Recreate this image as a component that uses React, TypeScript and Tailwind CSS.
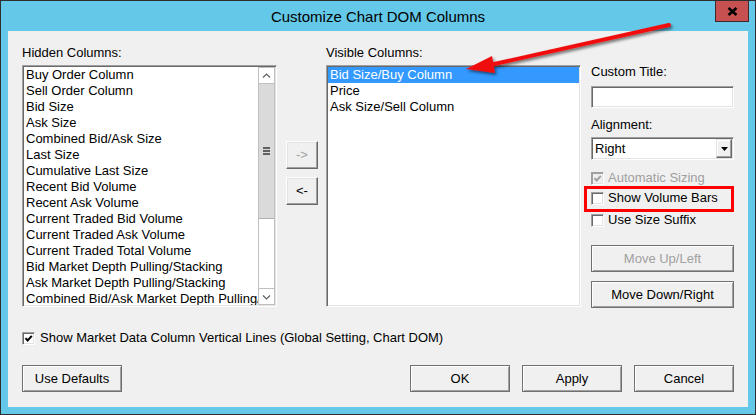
import React from "react";

const hidden = [
  "Buy Order Column",
  "Sell Order Column",
  "Bid Size",
  "Ask Size",
  "Combined Bid/Ask Size",
  "Last Size",
  "Cumulative Last Size",
  "Recent Bid Volume",
  "Recent Ask Volume",
  "Current Traded Bid Volume",
  "Current Traded Ask Volume",
  "Current Traded Total Volume",
  "Bid Market Depth Pulling/Stacking",
  "Ask Market Depth Pulling/Stacking",
  "Combined Bid/Ask Market Depth Pulling/Stacking",
];

const visible = ["Bid Size/Buy Column", "Price", "Ask Size/Sell Column"];

const sunken =
  "border border-t-[#a0a0a0] border-l-[#a0a0a0] border-r-white border-b-white shadow-[inset_1px_1px_0_#696969,inset_-1px_-1px_0_#e3e3e3]";

function Check({ checked, disabled }: { checked?: boolean; disabled?: boolean }) {
  return (
    <span
      className={
        disabled
          ? "flex h-[13px] w-[13px] shrink-0 items-center justify-center border border-t-[#a0a0a0] border-l-[#a0a0a0] border-r-white border-b-white bg-[#f0f0f0] shadow-[inset_1px_1px_0_#a0a0a0,inset_-1px_-1px_0_#e3e3e3]"
          : "flex h-[13px] w-[13px] shrink-0 items-center justify-center border border-t-[#a0a0a0] border-l-[#a0a0a0] border-r-white border-b-white bg-white shadow-[inset_1px_1px_0_#696969,inset_-1px_-1px_0_#e3e3e3]"
      }
    >
      {checked && (
        <svg width="9" height="9" viewBox="0 0 9 9">
          <path
            d="M1.5 4.2 L3.6 6.5 L7.8 1.8"
            stroke={disabled ? "#a0a0a0" : "#000"}
            strokeWidth="2"
            fill="none"
          />
        </svg>
      )}
    </span>
  );
}

function BigButton({ label, disabled, className }: { label: string; disabled?: boolean; className?: string }) {
  return (
    <div
      className={
        "flex h-[27px] items-center justify-center border border-[#707070] bg-[#f0f0f0] shadow-[inset_1px_1px_0_#ffffff,inset_-1px_-1px_0_#a0a0a0] " +
        (className ?? "")
      }
    >
      <span className={disabled ? "text-[#a0a0a0]" : "text-black"}>{label}</span>
    </div>
  );
}

function SmallButton({ label, disabled }: { label: string; disabled?: boolean }) {
  return (
    <div className="flex h-[28px] w-[32px] items-center justify-center border border-t-white border-l-white border-r-[#696969] border-b-[#696969] bg-[#f0f0f0] shadow-[inset_-1px_-1px_0_#a0a0a0,inset_1px_1px_0_#e3e3e3]">
      <span className={disabled ? "text-[#a0a0a0]" : "text-black"}>{label}</span>
    </div>
  );
}

function Scrollbar() {
  return (
    <div className="flex h-full w-[17px] shrink-0 flex-col border border-[#c0c0c0] bg-white">
      <div className="flex h-[16px] items-center justify-center border-b border-[#c0c0c0] bg-white">
        <svg width="9" height="6" viewBox="0 0 9 6">
          <path d="M1 4.5 L4.5 1 L8 4.5" stroke="#606060" strokeWidth="1.2" fill="none" />
        </svg>
      </div>
      <div className="flex h-[135px] flex-col items-center justify-center gap-px border-b border-[#b0b0b0] bg-[#dadada]">
        <div className="h-[2px] w-[7px] bg-[#606060]" />
        <div className="h-[2px] w-[7px] bg-[#606060]" />
        <div className="h-[2px] w-[7px] bg-[#606060]" />
      </div>
      <div className="flex-1 bg-white" />
      <div className="flex h-[16px] items-center justify-center border-t border-[#c0c0c0] bg-white">
        <svg width="9" height="6" viewBox="0 0 9 6">
          <path d="M1 1.5 L4.5 5 L8 1.5" stroke="#606060" strokeWidth="1.2" fill="none" />
        </svg>
      </div>
    </div>
  );
}

export default function App() {
  return (
    <div className="relative h-[415px] w-[756px] overflow-hidden border border-[#2e2e2e] bg-[#64c8e8] font-['Liberation_Sans',Arial,sans-serif] text-[13px] leading-[16px] text-black">
      {/* Title bar */}
      <div className="relative flex h-[30px] items-center justify-center">
        <span className="pt-px font-['Liberation_Sans',Arial,sans-serif] text-[15px] text-black">
          Customize Chart DOM Columns
        </span>
        <div className="absolute right-[6px] top-[-1px] flex h-[22px] w-[34px] items-center justify-center border border-[#3c2a2a] bg-[#c75050]">
          <svg width="11" height="9" viewBox="0 0 11 9">
            <path d="M1.5 1 L9.5 8 M9.5 1 L1.5 8" stroke="#000" strokeWidth="2.6" />
          </svg>
        </div>
      </div>

      {/* Content */}
      <div className="mx-[7px] flex h-[376px] flex-col bg-[#f0f0f0] px-[14px] pt-[14px]">
        <div className="flex h-[263px]">
          {/* Hidden columns */}
          <div className="flex w-[255px] shrink-0 flex-col">
            <div className="h-[16px]">Hidden Columns:</div>
            <div className={"mt-[4px] flex h-[242px] overflow-hidden bg-white p-px " + sunken}>
              <div className="min-w-0 flex-1 overflow-hidden">
                {hidden.map((h) => (
                  <div key={h} className="h-[16px] whitespace-nowrap pl-[2px]">
                    {h}
                  </div>
                ))}
              </div>
              <Scrollbar />
            </div>
          </div>

          {/* Arrow buttons */}
          <div className="ml-[9px] flex w-[32px] shrink-0 flex-col gap-[8px] pt-[96px]">
            <SmallButton label="->" disabled />
            <SmallButton label="<-" />
          </div>

          {/* Visible columns */}
          <div className="ml-[8px] flex w-[255px] shrink-0 flex-col">
            <div className="h-[16px]">Visible Columns:</div>
            <div className={"mt-[4px] h-[242px] overflow-hidden bg-white p-px " + sunken}>
              {visible.map((v, i) => (
                <div
                  key={v}
                  className={
                    i === 0
                      ? "h-[16px] whitespace-nowrap bg-[#3399ff] pl-[2px] text-white"
                      : "h-[16px] whitespace-nowrap pl-[2px]"
                  }
                >
                  {v}
                </div>
              ))}
            </div>
          </div>

          {/* Right panel */}
          <div className="ml-[10px] flex w-[143px] shrink-0 flex-col pt-[19px]">
            <div className="h-[16px]">Custom Title:</div>
            <div className={"mt-[6px] h-[22px] bg-white " + sunken} />
            <div className="mt-[9px] h-[16px]">Alignment:</div>
            <div className={"mt-[4px] flex h-[23px] items-center bg-white p-px " + sunken}>
              <span className="flex-1 pl-[2px]">Right</span>
              <div className="flex h-[19px] w-[16px] items-center justify-center border border-t-[#e3e3e3] border-l-[#e3e3e3] border-r-[#696969] border-b-[#696969] bg-[#f0f0f0] shadow-[inset_-1px_-1px_0_#a0a0a0,inset_1px_1px_0_#ffffff]">
                <svg width="7" height="4" viewBox="0 0 7 4">
                  <path d="M0 0 L7 0 L3.5 4 Z" fill="#000" />
                </svg>
              </div>
            </div>
            <div className="mt-[10px] flex h-[16px] items-center gap-[4px]">
              <Check checked disabled />
              <span className="text-[#a0a0a0]">Automatic Sizing</span>
            </div>
            <div className="relative mt-[4px] flex h-[16px] items-center gap-[4px]">
              <Check />
              <span>Show Volume Bars</span>
              <div className="pointer-events-none absolute bottom-[-6px] left-[-7px] right-0 top-[-4px] border-[3px] border-[#ff0000]" />
            </div>
            <div className="mt-[6px] flex h-[16px] items-center gap-[4px]">
              <Check />
              <span>Use Size Suffix</span>
            </div>
            <BigButton label="Move Up/Left" disabled className="mt-[17px]" />
            <BigButton label="Move Down/Right" className="mt-[9px]" />
          </div>
        </div>

        {/* Global setting checkbox */}
        <div className="mt-[22px] flex h-[16px] items-center gap-[5px]">
          <Check checked />
          <span>Show Market Data Column Vertical Lines (Global Setting, Chart DOM)</span>
        </div>

        {/* Bottom buttons */}
        <div className="mt-[19px] flex">
          <BigButton label="Use Defaults" className="w-[100px]" />
          <div className="flex-1" />
          <div className="flex gap-[12px]">
            <BigButton label="OK" className="w-[100px]" />
            <BigButton label="Apply" className="w-[100px]" />
            <BigButton label="Cancel" className="w-[100px]" />
          </div>
        </div>
      </div>

      {/* Annotation arrow */}
      <svg
        className="pointer-events-none absolute left-[-1px] top-[-1px]"
        width="756"
        height="415"
        viewBox="0 0 756 415"
      >
        <defs>
          <filter id="sh" x="-10%" y="-50%" width="130%" height="250%">
            <feDropShadow dx="1.5" dy="2" stdDeviation="1.4" floodColor="#000" floodOpacity="0.55" />
          </filter>
        </defs>
        <g filter="url(#sh)">
          <path d="M669 25 L490 65" stroke="#f01010" strokeWidth="4" strokeLinecap="round" fill="none" />
          <path d="M466 69 L492 56 L495 73 Z" fill="#f01010" />
        </g>
      </svg>
    </div>
  );
}
